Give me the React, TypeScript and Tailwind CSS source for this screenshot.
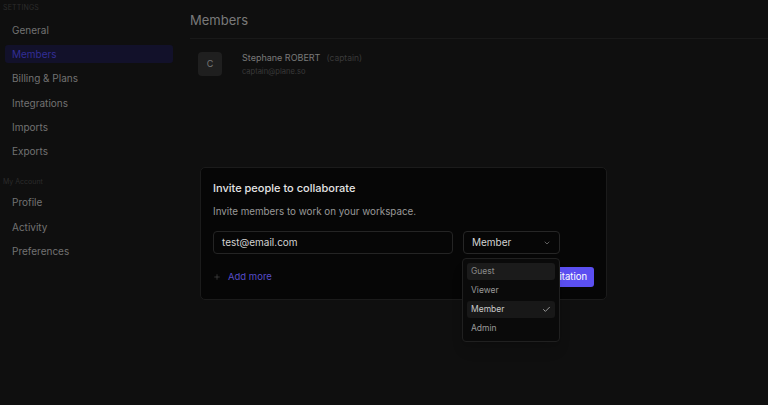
import { Check, ChevronDown, Plus } from "lucide-react";

const settingsLinks = ["General", "Members", "Billing & Plans", "Integrations", "Imports", "Exports"];
const accountLinks = ["Profile", "Activity", "Preferences"];
const roles = ["Guest", "Viewer", "Member", "Admin"];

function SidebarLink({ label, active }: { label: string; active?: boolean }) {
  return (
    <div
      className={`mx-[5px] flex h-[18px] items-center rounded-[3px] px-[7px] text-[10px] ${
        active ? "bg-[#12112a] text-[#322e96]" : "text-[#727272]"
      }`}
    >
      {label}
    </div>
  );
}

export default function App() {
  return (
    <div className="relative flex h-[405px] w-[768px] overflow-hidden bg-[#0f0f0f] font-['Inter',sans-serif]">
      {/* sidebar */}
      <aside className="flex w-[178px] shrink-0 flex-col">
        <div className="px-[3px] pt-[4px] text-[7px] leading-[8px] uppercase tracking-wide text-[#2c2c2c]">
          Settings
        </div>
        <div className="mt-[9px] flex flex-col gap-[6.4px]">
          {settingsLinks.map((l) => (
            <SidebarLink key={l} label={l} active={l === "Members"} />
          ))}
        </div>
        <div className="mt-[17px] px-[3px] text-[7px] leading-[8px] text-[#2c2c2c]">My Account</div>
        <div className="mt-[8px] flex flex-col gap-[6.4px]">
          {accountLinks.map((l) => (
            <SidebarLink key={l} label={l} />
          ))}
        </div>
      </aside>

      {/* main */}
      <main className="flex flex-1 flex-col pl-[12px]">
        <div className="flex h-[39px] items-center border-b border-[#191919] pt-[3px] text-[13px] text-[#7a7a7a]">
          Members
        </div>
        <div className="flex items-center gap-[20px] pl-[8px] pt-[12px]">
          <div className="flex h-[24px] w-[24px] items-center justify-center rounded-[4px] bg-[#1f1f1f] text-[9px] text-[#767676]">
            C
          </div>
          <div className="flex flex-col gap-[2px]">
            <div className="flex items-baseline gap-[6px] text-[9px] leading-[13px] text-[#7a7a7a]">
              Stephane ROBERT <span className="text-[8.5px] text-[#3a3a3a]">(captain)</span>
            </div>
            <div className="text-[7.5px] leading-[10px] text-[#3a3a3a]">captain@plane.so</div>
          </div>
        </div>
      </main>

      {/* invite modal */}
      <div className="absolute left-[200px] top-[167px] flex h-[133px] w-[407px] flex-col rounded-[5px] border border-[#1b1b1b] bg-[#060606] px-[12px]">
        <div className="mt-[12px] text-[11px] font-medium leading-[16px] text-[#e4e4e4]">
          Invite people to collaborate
        </div>
        <div className="mt-[10px] text-[9.8px] leading-[12px] text-[#999999]">
          Invite members to work on your workspace.
        </div>
        <div className="mt-[13px] flex gap-[10px]">
          <div className="flex h-[23px] w-[240px] items-center rounded-[4px] border border-[#242424] px-[8px] text-[10px] text-[#d2d2d2]">
            test@email.com
          </div>
          <div className="flex h-[23px] w-[97px] items-center justify-between rounded-[4px] border border-[#262626] pl-[8px] pr-[8px] text-[10px] text-[#d2d2d2]">
            Member
            <ChevronDown size={8} className="text-[#8a8a8a]" />
          </div>
        </div>
        <div className="mt-[13px] flex items-center justify-between">
          <div className="flex items-center gap-[7px] text-[9.5px] text-[#574dc8]">
            <Plus size={8} className="text-[#4a4a4a]" />
            Add more
          </div>
          <div className="flex h-[20px] items-center rounded-[3px] bg-[#5b4ff1] px-[7px] text-[9.5px] text-white">
            Send Invitation
          </div>
        </div>
      </div>

      {/* role dropdown */}
      <div className="absolute left-[462px] top-[258px] flex w-[98px] flex-col gap-[2px] rounded-[4px] border border-[#202020] bg-[#0a0a0a] p-[4px] shadow-lg">
        {roles.map((r) => (
          <div
            key={r}
            className={`flex h-[17px] items-center justify-between rounded-[3px] px-[4px] text-[8.5px] ${
              r === "Guest"
                ? "bg-[#1b1b1b] text-[#8a8a8a]"
                : r === "Member"
                ? "bg-[#181818] text-[#c9c9c9]"
                : "text-[#9a9a9a]"
            }`}
          >
            {r}
            {r === "Member" && <Check size={9} className="text-[#bdbdbd]" />}
          </div>
        ))}
      </div>
    </div>
  );
}
